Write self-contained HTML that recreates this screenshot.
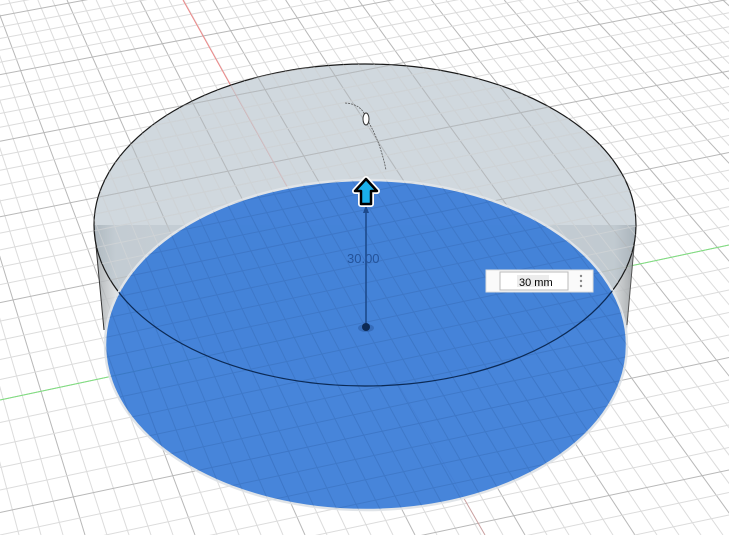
<!DOCTYPE html>
<html><head><meta charset="utf-8"><style>
html,body{margin:0;padding:0;background:#fff;width:729px;height:535px;overflow:hidden}
svg{display:block;overflow:hidden}
</style></head><body>
<svg id="s" width="729" height="535" viewBox="0 0 729 535" xmlns="http://www.w3.org/2000/svg">
<defs>
<linearGradient id="side" x1="0" x2="1" y1="0" y2="0">
<stop offset="0" stop-color="#9ea3a6"/><stop offset="0.04" stop-color="#d9dcde"/><stop offset="0.5" stop-color="#e8eaeb"/><stop offset="0.96" stop-color="#d2d5d7"/><stop offset="1" stop-color="#8e9396"/>
</linearGradient>
<clipPath id="cb"><ellipse cx="366" cy="345" rx="261" ry="165"/></clipPath>
<clipPath id="ct"><ellipse cx="365" cy="225" rx="271" ry="161"/></clipPath>
</defs>
<g id="grid"></g>
<path d="M94 225 L104 330 L627 330 L636 225 Z" fill="url(#side)" opacity="0.85"/>
<path d="M94 225 L104 330" stroke="#333" stroke-width="1"/>
<path d="M636 225 L627 325" stroke="#555" stroke-width="1"/>
<ellipse cx="365" cy="225" rx="271" ry="161" fill="#b0bec8" fill-opacity="0.6" stroke="#1a1a1a" stroke-width="1.2"/>
<g id="grid2" opacity="0.5" clip-path="url(#ct)"></g>
<path d="M345 103 Q362 104 366 118 Q380 140 386 170" fill="none" stroke="#555" stroke-width="0.8" stroke-dasharray="2 1"/>
<ellipse cx="366" cy="119" rx="3" ry="6" fill="#fff" stroke="#333" stroke-width="1"/>
<ellipse cx="366" cy="345" rx="261" ry="165" fill="#3d7ed8" fill-opacity="0.95" stroke="#e0e4e8" stroke-width="2.5"/>
<g clip-path="url(#cb)"><g id="grid3" opacity="0.1"></g>
<path d="M94 225 A271 161 0 0 0 636 225" fill="none" stroke="#0c2a55" stroke-width="1.2"/>
</g>
<line x1="366" y1="206" x2="366" y2="326" stroke="#1d4a8c" stroke-width="1.6"/>
<path d="M363 213 L366 205 L369 213 Z" fill="#1d4a8c"/>
<ellipse cx="366" cy="328" rx="8" ry="4" fill="#2d5fa8" opacity="0.6"/>
<circle cx="366" cy="327" r="4" fill="#0c2a55"/>
<text x="347" y="263" font-family="Liberation Sans, sans-serif" font-size="13" fill="#24539a">30.00</text>
<path d="M366 179 L377 191 L371 191 L371 204 L361 204 L361 191 L355 191 Z" fill="#1ab0ea" stroke="#fff" stroke-width="6" stroke-linejoin="round"/>
<path d="M366 179 L377 191 L371 191 L371 204 L361 204 L361 191 L355 191 Z" fill="#1ab0ea" stroke="#000" stroke-width="2.5" stroke-linejoin="round"/>
<rect x="486" y="270" width="107" height="22" fill="#fafafa" stroke="#ddd"/>
<rect x="500" y="272" width="68" height="18" fill="#fff" stroke="#bbb"/>
<rect x="517" y="275" width="32" height="12" fill="#ececec"/>
<text x="519" y="286" font-family="Liberation Sans, sans-serif" font-size="11" fill="#000">30 mm</text>
<circle cx="581" cy="276" r="1.2" fill="#888"/><circle cx="581" cy="281" r="1.2" fill="#888"/><circle cx="581" cy="286" r="1.2" fill="#888"/>
</svg>
<script>
(function(){
function build(id,dark){
var g=document.getElementById(id);var out="";
var V=[-400,-1050];
var c1=dark?"#0a1f44":"#b8b8b8", c2=dark?"#0a1f44":"#dcdcdc";
for(var i=-40;i<60;i++){
 var x=415+i*22; var c=(i%5==0)?c1:c2;
 var t=(0-V[1])/(535-V[1]); var x0=V[0]+(x-V[0])*t;
 out+='<line x1="'+x0+'" y1="0" x2="'+x+'" y2="535" stroke="'+c+'" stroke-width="1"/>';
}
for(var k=0;k<40;k++){
 var yy=400+k*22.5; if(yy>800)break;
 out+='<line x1="0" y1="'+yy+'" x2="729" y2="'+(yy-155)+'" stroke="'+((k%5==0)?c1:c2)+'"/>';
}
var s=21;yy=400;
for(k=1;k<60;k++){
 s=s*0.975; yy-=s; if(yy<-200)break;
 out+='<line x1="0" y1="'+yy+'" x2="729" y2="'+(yy-155+(400-yy)*0.05)+'" stroke="'+((k%5==0)?c1:c2)+'"/>';
}
if(id=="grid"){
out+='<line x1="0" y1="400" x2="729" y2="245" stroke="#7ee07e" stroke-width="1"/>';
out+='<line x1="183" y1="0" x2="366" y2="328" stroke="#e88" stroke-width="1"/>';
out+='<line x1="366" y1="328" x2="485" y2="535" stroke="#c9a0a0" stroke-width="1"/>';
}
g.innerHTML=out;
}
build("grid",false);build("grid2",false);build("grid3",true);
})();
</script>
</body></html>
